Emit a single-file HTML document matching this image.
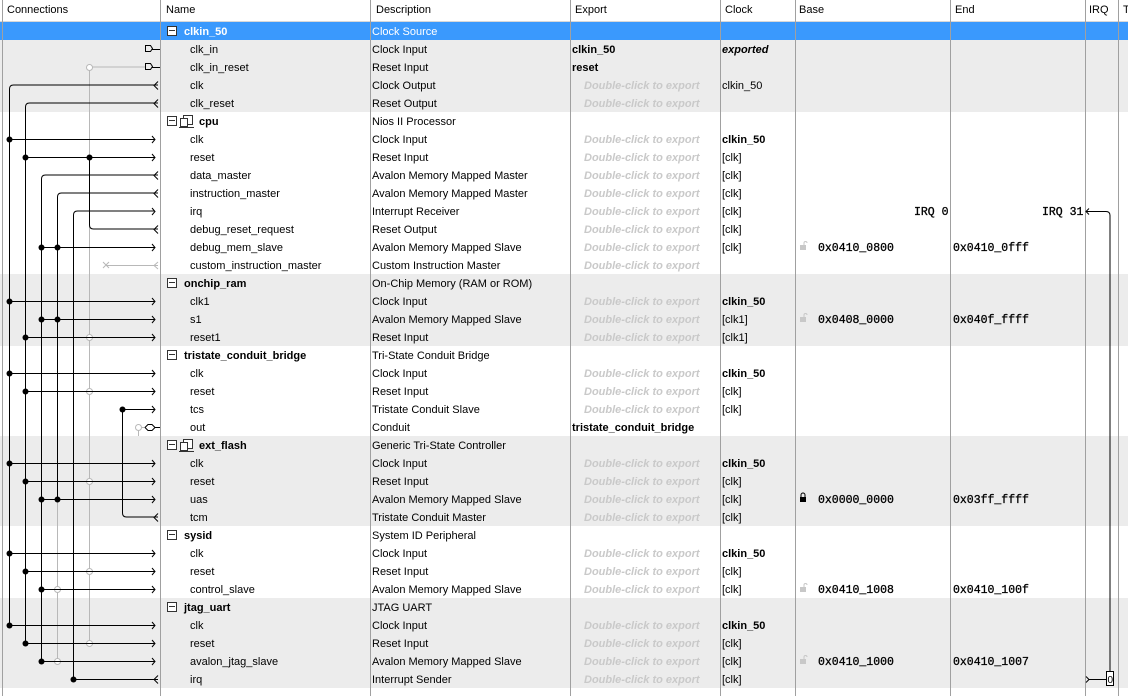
<!DOCTYPE html>
<html><head><meta charset="utf-8"><style>
*{margin:0;padding:0;box-sizing:border-box}
body{width:1128px;height:696px;overflow:hidden;background:#fff;font-family:"Liberation Sans",sans-serif;font-size:11px;color:#000;position:relative}
.hdr{position:absolute;top:0;left:0;width:1128px;height:22px;background:#fff;border-bottom:1px solid #d8d8d8}
.hdr span{position:absolute;top:4px}
.row{position:absolute;left:0;width:1128px;height:18px}
.row span{position:absolute;top:4px;white-space:nowrap}
.g{background:#ececec}
.sel{background:#3a99fd;color:#fff}
.n{left:190px}.gn{left:184px;font-weight:bold}.gi{left:199px;font-weight:bold}
.d{left:372px}.e{left:572px;font-weight:bold}
.x{left:584px;font-weight:bold;font-style:italic;color:#c9c9c9}
.c{left:722px}.cb{left:722px;font-weight:bold}
.b{left:818px;font-family:"Liberation Mono",monospace;font-size:11.5px;top:4px!important;-webkit-text-stroke:0.3px #000}
.en{left:953px;font-family:"Liberation Mono",monospace;font-size:11.5px;top:4px!important;-webkit-text-stroke:0.3px #000}
.box{position:absolute;left:167px;top:4px;width:10px;height:10px;border:1px solid #333;background:#fff}
.box:after{content:"";position:absolute;left:1px;top:3px;width:6px;height:1px;background:#333}
.vl{position:absolute;top:0;width:1px;height:696px;background:#a0a0a0}
svg{position:absolute;left:0;top:0}
</style></head><body>
<div class="hdr"><span style="left:7px">Connections</span><span style="left:166px">Name</span><span style="left:376px">Description</span><span style="left:575px">Export</span><span style="left:725px">Clock</span><span style="left:799px">Base</span><span style="left:955px">End</span><span style="left:1089px">IRQ</span><span style="left:1123px">T</span></div>

<div class="row sel" style="top:22px"><div class="box"></div><span class="gn" style="color:#fff">clkin_50</span><span class="d">Clock Source</span></div>
<div class="row g" style="top:40px"><span class="n">clk_in</span><span class="d">Clock Input</span><span class="e">clkin_50</span><span class="cb" style="font-style:italic">exported</span></div>
<div class="row g" style="top:58px"><span class="n">clk_in_reset</span><span class="d">Reset Input</span><span class="e">reset</span></div>
<div class="row g" style="top:76px"><span class="n">clk</span><span class="d">Clock Output</span><span class="x">Double-click to export</span><span class="c">clkin_50</span></div>
<div class="row g" style="top:94px"><span class="n">clk_reset</span><span class="d">Reset Output</span><span class="x">Double-click to export</span></div>
<div class="row" style="top:112px"><div class="box"></div><span class="gi">cpu</span><span class="d">Nios II Processor</span></div>
<div class="row" style="top:130px"><span class="n">clk</span><span class="d">Clock Input</span><span class="x">Double-click to export</span><span class="cb">clkin_50</span></div>
<div class="row" style="top:148px"><span class="n">reset</span><span class="d">Reset Input</span><span class="x">Double-click to export</span><span class="c">[clk]</span></div>
<div class="row" style="top:166px"><span class="n">data_master</span><span class="d">Avalon Memory Mapped Master</span><span class="x">Double-click to export</span><span class="c">[clk]</span></div>
<div class="row" style="top:184px"><span class="n">instruction_master</span><span class="d">Avalon Memory Mapped Master</span><span class="x">Double-click to export</span><span class="c">[clk]</span></div>
<div class="row" style="top:202px"><span class="n">irq</span><span class="d">Interrupt Receiver</span><span class="x">Double-click to export</span><span class="c">[clk]</span><span class="b" style="left:914px">IRQ 0</span><span class="en" style="left:1042px">IRQ 31</span></div>
<div class="row" style="top:220px"><span class="n">debug_reset_request</span><span class="d">Reset Output</span><span class="x">Double-click to export</span><span class="c">[clk]</span></div>
<div class="row" style="top:238px"><span class="n">debug_mem_slave</span><span class="d">Avalon Memory Mapped Slave</span><span class="x">Double-click to export</span><span class="c">[clk]</span><span class="b">0x0410_0800</span><span class="en">0x0410_0fff</span></div>
<div class="row" style="top:256px"><span class="n">custom_instruction_master</span><span class="d">Custom Instruction Master</span><span class="x">Double-click to export</span></div>
<div class="row g" style="top:274px"><div class="box"></div><span class="gn">onchip_ram</span><span class="d">On-Chip Memory (RAM or ROM)</span></div>
<div class="row g" style="top:292px"><span class="n">clk1</span><span class="d">Clock Input</span><span class="x">Double-click to export</span><span class="cb">clkin_50</span></div>
<div class="row g" style="top:310px"><span class="n">s1</span><span class="d">Avalon Memory Mapped Slave</span><span class="x">Double-click to export</span><span class="c">[clk1]</span><span class="b">0x0408_0000</span><span class="en">0x040f_ffff</span></div>
<div class="row g" style="top:328px"><span class="n">reset1</span><span class="d">Reset Input</span><span class="x">Double-click to export</span><span class="c">[clk1]</span></div>
<div class="row" style="top:346px"><div class="box"></div><span class="gn">tristate_conduit_bridge</span><span class="d">Tri-State Conduit Bridge</span></div>
<div class="row" style="top:364px"><span class="n">clk</span><span class="d">Clock Input</span><span class="x">Double-click to export</span><span class="cb">clkin_50</span></div>
<div class="row" style="top:382px"><span class="n">reset</span><span class="d">Reset Input</span><span class="x">Double-click to export</span><span class="c">[clk]</span></div>
<div class="row" style="top:400px"><span class="n">tcs</span><span class="d">Tristate Conduit Slave</span><span class="x">Double-click to export</span><span class="c">[clk]</span></div>
<div class="row" style="top:418px"><span class="n">out</span><span class="d">Conduit</span><span class="e">tristate_conduit_bridge</span></div>
<div class="row g" style="top:436px"><div class="box"></div><span class="gi">ext_flash</span><span class="d">Generic Tri-State Controller</span></div>
<div class="row g" style="top:454px"><span class="n">clk</span><span class="d">Clock Input</span><span class="x">Double-click to export</span><span class="cb">clkin_50</span></div>
<div class="row g" style="top:472px"><span class="n">reset</span><span class="d">Reset Input</span><span class="x">Double-click to export</span><span class="c">[clk]</span></div>
<div class="row g" style="top:490px"><span class="n">uas</span><span class="d">Avalon Memory Mapped Slave</span><span class="x">Double-click to export</span><span class="c">[clk]</span><span class="b">0x0000_0000</span><span class="en">0x03ff_ffff</span></div>
<div class="row g" style="top:508px"><span class="n">tcm</span><span class="d">Tristate Conduit Master</span><span class="x">Double-click to export</span><span class="c">[clk]</span></div>
<div class="row" style="top:526px"><div class="box"></div><span class="gn">sysid</span><span class="d">System ID Peripheral</span></div>
<div class="row" style="top:544px"><span class="n">clk</span><span class="d">Clock Input</span><span class="x">Double-click to export</span><span class="cb">clkin_50</span></div>
<div class="row" style="top:562px"><span class="n">reset</span><span class="d">Reset Input</span><span class="x">Double-click to export</span><span class="c">[clk]</span></div>
<div class="row" style="top:580px"><span class="n">control_slave</span><span class="d">Avalon Memory Mapped Slave</span><span class="x">Double-click to export</span><span class="c">[clk]</span><span class="b">0x0410_1008</span><span class="en">0x0410_100f</span></div>
<div class="row g" style="top:598px"><div class="box"></div><span class="gn">jtag_uart</span><span class="d">JTAG UART</span></div>
<div class="row g" style="top:616px"><span class="n">clk</span><span class="d">Clock Input</span><span class="x">Double-click to export</span><span class="cb">clkin_50</span></div>
<div class="row g" style="top:634px"><span class="n">reset</span><span class="d">Reset Input</span><span class="x">Double-click to export</span><span class="c">[clk]</span></div>
<div class="row g" style="top:652px"><span class="n">avalon_jtag_slave</span><span class="d">Avalon Memory Mapped Slave</span><span class="x">Double-click to export</span><span class="c">[clk]</span><span class="b">0x0410_1000</span><span class="en">0x0410_1007</span></div>
<div class="row g" style="top:670px"><span class="n">irq</span><span class="d">Interrupt Sender</span><span class="x">Double-click to export</span><span class="c">[clk]</span></div>

<div class="vl" style="left:2px"></div><div class="vl" style="left:160px"></div><div class="vl" style="left:370px"></div><div class="vl" style="left:570px"></div><div class="vl" style="left:720px"></div><div class="vl" style="left:795px"></div><div class="vl" style="left:950px"></div><div class="vl" style="left:1085px"></div><div class="vl" style="left:1118px"></div>

<svg width="1128" height="696" viewBox="0 0 1128 696" fill="none" stroke-width="1">
<g stroke="#333" fill="#fff">
<rect x="183.5" y="115.5" width="9" height="9"/><rect x="180.5" y="118.5" width="7" height="8"/><line x1="179" y1="127.5" x2="194" y2="127.5"/>
<rect x="183.5" y="439.5" width="9" height="9"/><rect x="180.5" y="442.5" width="7" height="8"/><line x1="179" y1="451.5" x2="194" y2="451.5"/>
</g>
<g stroke="#b8b8b8">
<path d="M89.5 67V643"/><path d="M89.5 67H146"/>
<path d="M57.5 499V661"/>
<path d="M106 265.5H158M158 262L154 265.5L158 269"/>
<path d="M103 262l6 6M109 262l-6 6"/>
<path d="M138.5 427V436"/><path d="M138 427.5H144"/>
</g>
<g fill="#fff" stroke="#b8b8b8">
<circle cx="89.5" cy="67.5" r="3"/><circle cx="89.5" cy="337.5" r="3"/><circle cx="89.5" cy="391.5" r="3"/><circle cx="89.5" cy="481.5" r="3"/><circle cx="89.5" cy="571.5" r="3"/><circle cx="89.5" cy="643.5" r="3"/>
<circle cx="57.5" cy="589.5" r="3"/><circle cx="57.5" cy="661.5" r="3"/><circle cx="138.5" cy="427.5" r="3"/>
</g>
<g stroke="#000">
<path d="M145.5 45.5h5l2 3l-2 3h-5z M152 49.5H160"/>
<path d="M145.5 63.5h5l2 3l-2 3h-5z M152 67.5H160"/>
<path d="M145 427.5l3-3h4l3 3l-3 3h-4z M155 427.5H160"/>
<path d="M9.5 625V89q0-4 4-4H158M158 81.5l-4 4l4 4"/>
<path d="M25.5 643V107q0-4 4-4H158M158 99.5l-4 4l4 4"/>
<path d="M41.5 661V179q0-4 4-4H158M158 171.5l-4 4l4 4"/>
<path d="M57.5 499V197q0-4 4-4H158M158 189.5l-4 4l4 4"/>
<path d="M73.5 679V215q0-4 4-4H155M152 208l3 3.5l-3 3.5"/>
<path d="M89.5 157V225q0 4 4 4H158M158 225.5l-4 4l4 4"/>
<path d="M122.5 409V513q0 4 4 4H158M158 513.5l-4 4l4 4"/>
<path d="M73 679.5H158M158 675.5l-4 4l4 4"/>
</g>
<g stroke="#000">
<path d="M9 139.5H155M25 157.5H155M41 247.5H155M9 301.5H155M41 319.5H155M25 337.5H155M9 373.5H155M25 391.5H155M122 409.5H155M9 463.5H155M25 481.5H155M41 499.5H155M9 553.5H155M25 571.5H155M41 589.5H155M9 625.5H155M25 643.5H155M41 661.5H155"/>
<path d="M152 136l3 3.5l-3 3.5M152 154l3 3.5l-3 3.5M152 244l3 3.5l-3 3.5M152 298l3 3.5l-3 3.5M152 316l3 3.5l-3 3.5M152 334l3 3.5l-3 3.5M152 370l3 3.5l-3 3.5M152 388l3 3.5l-3 3.5M152 406l3 3.5l-3 3.5M152 460l3 3.5l-3 3.5M152 478l3 3.5l-3 3.5M152 496l3 3.5l-3 3.5M152 550l3 3.5l-3 3.5M152 568l3 3.5l-3 3.5M152 586l3 3.5l-3 3.5M152 622l3 3.5l-3 3.5M152 640l3 3.5l-3 3.5M152 658l3 3.5l-3 3.5"/>
</g>
<g fill="#000">
<circle cx="9.5" cy="139.5" r="3"/><circle cx="25.5" cy="157.5" r="3"/><circle cx="89.5" cy="157.5" r="3"/>
<circle cx="41.5" cy="247.5" r="3"/><circle cx="57.5" cy="247.5" r="3"/>
<circle cx="9.5" cy="301.5" r="3"/><circle cx="41.5" cy="319.5" r="3"/><circle cx="57.5" cy="319.5" r="3"/><circle cx="25.5" cy="337.5" r="3"/>
<circle cx="9.5" cy="373.5" r="3"/><circle cx="25.5" cy="391.5" r="3"/><circle cx="122.5" cy="409.5" r="3"/>
<circle cx="9.5" cy="463.5" r="3"/><circle cx="25.5" cy="481.5" r="3"/><circle cx="41.5" cy="499.5" r="3"/><circle cx="57.5" cy="499.5" r="3"/>
<circle cx="9.5" cy="553.5" r="3"/><circle cx="25.5" cy="571.5" r="3"/><circle cx="41.5" cy="589.5" r="3"/>
<circle cx="9.5" cy="625.5" r="3"/><circle cx="25.5" cy="643.5" r="3"/><circle cx="41.5" cy="661.5" r="3"/><circle cx="73.5" cy="679.5" r="3"/>
</g>
<g fill="#c8c8c8"><rect x="800" y="245" width="6" height="5"/><rect x="800" y="317" width="6" height="5"/><rect x="800" y="587" width="6" height="5"/><rect x="800" y="659" width="6" height="5"/></g>
<g stroke="#c8c8c8"><path d="M804 245v-2a1.5 1.5 0 0 1 3 0M804 317v-2a1.5 1.5 0 0 1 3 0M804 587v-2a1.5 1.5 0 0 1 3 0M804 659v-2a1.5 1.5 0 0 1 3 0"/></g>
<rect x="800" y="497" width="6" height="5" fill="#000"/><path d="M801 497v-2a2 2 0 0 1 4 0v2" stroke="#000"/>
<g stroke="#000">
<path d="M1086 211.5H1106q4 0 4 4V676"/><path d="M1089 208.5l-3 3l3 3"/>
<path d="M1086 676.5l3 3l-3 3M1089 679.5H1106"/>
<rect x="1106.5" y="671.5" width="7" height="14" fill="#fff"/>
</g>
<text x="1107.5" y="683" font-family="Liberation Sans" font-size="10" fill="#000">0</text>
</svg>
</body></html>
